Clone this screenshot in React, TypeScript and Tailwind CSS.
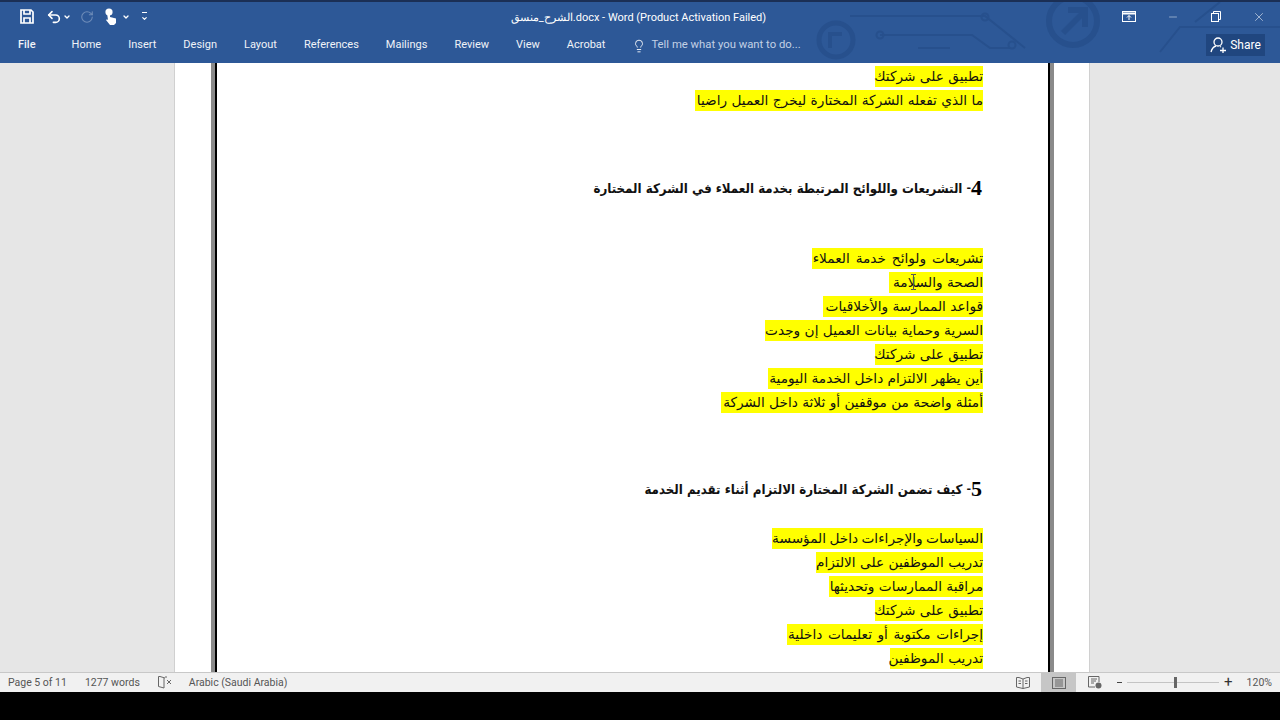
import React from "react";
import { Lightbulb, Minus, X, Undo2, RotateCw, ChevronDown } from "lucide-react";

const tabs = ["Home", "Insert", "Design", "Layout", "References", "Mailings", "Review", "View", "Acrobat"];

const Line = ({ text, w }: { text: string; w: string }) => (
  <div className="h-[24px] flex items-center">
    <span className={`bg-[#ffff00] h-[21px] leading-[21px] whitespace-nowrap text-[#111] ${w}`}>{text}</span>
  </div>
);

const Heading = ({ num, text }: { num: string; text: string }) => (
  <div className="h-[24px] flex items-center font-bold text-[#111] pr-[1px] whitespace-nowrap">
    <span className="font-['Liberation_Serif'] font-bold text-[22px] leading-[24px] text-black">{num}</span>
    <span className="text-[11px]">-</span>
    <span className="mr-[4px] pt-[2px] font-['DejaVu_Sans_Condensed','DejaVu_Sans',sans-serif] text-[13.2px]">{text}</span>
  </div>
);

const TitleArt = () => (
  <svg className="absolute left-[800px] top-0" width="480" height="62" viewBox="0 0 480 62" fill="none" stroke="#27508d" strokeWidth="2">
    <path d="M50 14H185L225 46" />
    <circle cx="185" cy="15" r="3.5" />
    <path d="M80 33H172L190 46H210" />
    <circle cx="80" cy="33" r="3.5" />
    <path d="M118 46H150" />
    <circle cx="212" cy="43" r="3.5" />
    <circle cx="273" cy="19" r="24" strokeWidth="6" />
    <path d="M263 31L284 10M268 8H285V25" strokeWidth="6" />
    <circle cx="36" cy="38" r="17" strokeWidth="5" />
    <path d="M30 46V32H42" strokeWidth="4" />
    <path d="M360 50L380 25H480M395 20L420 0" />
  </svg>
);

const App = () => {
  return (
    <div className="w-[1280px] h-[720px] overflow-hidden bg-black flex flex-col font-['Roboto',sans-serif]">
      <header className="relative h-[63px] shrink-0 bg-[#2d5897] border-t-2 border-[#1b2f55] text-white">
        <TitleArt />
        <div className="relative h-[29px] flex items-center">
          <div className="flex items-center pl-[20px]">
            <svg width="14" height="15" viewBox="0 0 14 15" fill="none" stroke="white" strokeWidth="1.7">
              <path d="M1 1H11L13 3V14H1Z" />
              <path d="M4 1V5H10V1M4 14V9H10V14" />
            </svg>
            <Undo2 className="ml-[12px]" size={16} strokeWidth={2.4} />
            <ChevronDown className="ml-[1px]" size={8} strokeWidth={4} />
            <RotateCw className="ml-[9px] text-[#6f8db9]" size={14} strokeWidth={1.8} />
            <svg className="ml-[10px]" width="14" height="17" viewBox="0 0 14 17" fill="white">
              <circle cx="5" cy="4" r="3.6" />
              <path d="M3 5h3v4l6 1.5V15l-2 2H6L2 12l1-.8 1 .8z" />
            </svg>
            <ChevronDown className="ml-[4px]" size={8} strokeWidth={4} />
            <div className="ml-[11px] flex flex-col items-center gap-[2px]">
              <div className="w-[5px] h-[1px] bg-white" />
              <ChevronDown size={7} strokeWidth={4} />
            </div>
          </div>
          <div className="absolute left-0 right-0 top-0 h-[29px] pt-[4px] flex items-center justify-center text-[11px]">
            <span className="mr-[3px]">الشرح_منسق.docx - Word (Product Activation Failed)</span>
          </div>
          <div className="ml-auto flex items-center text-[#f2f5fa]">
            <svg width="14" height="11" viewBox="0 0 14 11" fill="none" stroke="white" strokeWidth="1">
              <rect x="0.5" y="0.5" width="13" height="10" />
              <path d="M1 2.5H13" strokeWidth="2" />
              <path d="M7 9V4.5M5 6.5L7 4.5L9 6.5" />
            </svg>
            <Minus className="ml-[31px]" size={12} strokeWidth={1} />
            <svg className="ml-[32px]" width="10" height="11" viewBox="0 0 10 11" fill="none" stroke="white" strokeWidth="1">
              <rect x="0.5" y="2.5" width="7" height="8" />
              <path d="M2.5 2.5V.5H9.5V8.5H7.5" />
            </svg>
            <X className="ml-[31px] mr-[14px]" size={14} strokeWidth={1} />
          </div>
        </div>
        <nav className="relative h-[27px] flex items-center text-[11px] text-[#f0f3f8]">
          <span className="ml-[18px] mr-[36px] pt-[2px] font-medium">File</span>
          <div className="flex items-center gap-[27px] pt-[2px]">
            {tabs.map((t) => (
              <span key={t}>{t}</span>
            ))}
          </div>
          <div className="ml-[27px] flex items-center text-[#c3d1e5] pt-[2px]">
            <Lightbulb size={14} strokeWidth={1.5} className="text-white" />
            <span className="ml-[5px] text-[11.3px]">Tell me what you want to do...</span>
          </div>
          <div className="ml-auto mr-[15px] h-[22px] w-[59px] bg-[#20467f] flex items-center justify-center gap-[3px] text-[12px] text-white">
            <svg width="17" height="16" viewBox="0 0 17 16" fill="none" stroke="white" strokeWidth="1.3">
              <circle cx="8" cy="5" r="4" />
              <path d="M1 15C2 11 4 9.5 6 9M10 9.5L11 10M10 13.5H16M13 10.5V16" />
            </svg>
            <span>Share</span>
          </div>
        </nav>
      </header>

      <main className="relative flex-1 bg-[#e6e6e6] flex overflow-hidden">
        <div className="ml-[174px] w-[916px] h-full bg-white border-x border-[#d0d0d0] pl-[36px] pr-[35px]">
          <div className="h-full border-x-[4px] border-x-[#8a8a8a]">
            <div className="relative h-full border-l-[2px] border-r-[2px] border-x-black">
              <div
                dir="rtl"
                className="h-full overflow-hidden pt-[1px] pr-[65px] flex flex-col items-start text-[13.7px] font-['DejaVu_Sans',sans-serif]"
              >
                <Line w="w-[108px]" text="تطبيق على شركتك" />
                <Line w="w-[288px]" text="ما الذي تفعله الشركة المختارة ليخرج العميل راضيا" />
                <div className="h-[64px]" />
                <Heading num="4" text="التشريعات واللوائح المرتبطة بخدمة العملاء في الشركة المختارة" />
                <div className="h-[46px]" />
                <Line w="w-[171px] [word-spacing:1.5px]" text="تشريعات ولوائح خدمة العملاء" />
                <Line w="w-[94px]" text="الصحة والسلامة" />
                <Line w="w-[160px]" text="قواعد الممارسة والأخلاقيات" />
                <Line w="w-[218px]" text="السرية وحماية بيانات العميل إن وجدت" />
                <Line w="w-[108px]" text="تطبيق على شركتك" />
                <Line w="w-[215px]" text="أين يظهر الالتزام داخل الخدمة اليومية" />
                <Line w="w-[262px]" text="أمثلة واضحة من موقفين أو ثلاثة داخل الشركة" />
                <div className="h-[63px]" />
                <Heading num="5" text="كيف تضمن الشركة المختارة الالتزام أثناء تقديم الخدمة" />
                <div className="h-[25px]" />
                <Line w="w-[211px] [word-spacing:-1px]" text="السياسات والإجراءات داخل المؤسسة" />
                <Line w="w-[167px]" text="تدريب الموظفين على الالتزام" />
                <Line w="w-[154px]" text="مراقبة الممارسات وتحديثها" />
                <Line w="w-[108px]" text="تطبيق على شركتك" />
                <Line w="w-[196px] [word-spacing:1.2px]" text="إجراءات مكتوبة أو تعليمات داخلية" />
                <Line w="w-[93px]" text="تدريب الموظفين" />
              </div>
              {/* text cursor left over the page */}
              <svg className="absolute left-[693px] top-[211px]" width="7" height="16" viewBox="0 0 7 16" fill="none" stroke="#555" strokeWidth="1">
                <path d="M1 .5H3.5V15.5H1M6 .5H3.5M6 15.5H3.5" />
              </svg>
            </div>
          </div>
        </div>
      </main>

      <footer className="h-[20px] shrink-0 bg-[#f1f1f1] border-t border-[#c8c8c8] flex items-center text-[10.5px] text-[#555] relative">
        <span className="ml-[8px]">Page 5 of 11</span>
        <span className="ml-[18px]">1277 words</span>
        <svg className="ml-[18px]" width="14" height="13" viewBox="0 0 14 13" fill="none" stroke="#666" strokeWidth="1">
          <path d="M7 2L2 .5H.5V10.5L6 12V2M9 1H7" />
          <path d="M9 4L13 8M13 4L9 8" />
        </svg>
        <span className="ml-[17px]">Arabic (Saudi Arabia)</span>
        <div className="ml-auto flex items-center h-full">
          <svg width="14" height="12" viewBox="0 0 14 12" fill="none" stroke="#666" strokeWidth="1">
            <path d="M7 2L3 .5H.5V10L7 11.5L13.5 10V.5H11L7 2V11.5" />
            <path d="M2.5 4H5M2.5 6.5H5M9 4H11.5M9 6.5H11.5" />
          </svg>
          <div className="ml-[11px] w-[35px] h-full bg-[#c6c6c6] flex items-center justify-center">
            <svg width="14" height="12" viewBox="0 0 14 12" fill="none" stroke="#666" strokeWidth="1">
              <rect x="0.5" y="0.5" width="13" height="11" />
              <path d="M3 3H11M3 5H11M3 7H11M3 9H11" />
            </svg>
          </div>
          <svg className="ml-[12px]" width="14" height="13" viewBox="0 0 14 13" fill="none" stroke="#666" strokeWidth="1">
            <path d="M7 11H.5V.5H11V6" />
            <path d="M3 3H9M3 5H8M3 7H6" />
            <circle cx="10.5" cy="9.5" r="3" fill="#666" stroke="none" />
          </svg>
          <span className="ml-[15px] w-[5px] h-[1.5px] bg-[#444]" />
          <div className="relative ml-[5px] w-[92px] h-[1px] bg-[#c4c4c4]">
            <div className="absolute left-[47px] top-[-5px] w-[3px] h-[11px] bg-[#666]" />
          </div>
          <span className="ml-[5px] text-[15px] leading-none text-[#333]">+</span>
          <span className="ml-[14px] mr-[8px]">120%</span>
        </div>
      </footer>
      <div className="h-[28px] shrink-0 bg-black" />
    </div>
  );
};

export default App;
